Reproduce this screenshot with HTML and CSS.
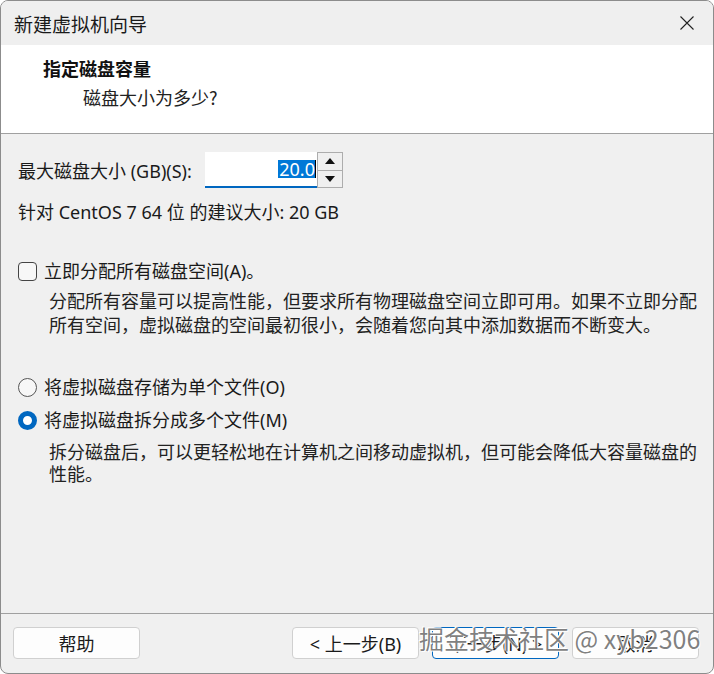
FILE: index.html
```html
<!DOCTYPE html>
<html lang="zh-CN">
<head>
<meta charset="utf-8">
<title>新建虚拟机向导</title>
<link rel="stylesheet" href="styles.css">
</head>
<body>
<div class="window">
  <div class="titlebar">
    <span class="title">新建虚拟机向导</span>
    <span class="close">
      <svg width="16" height="16" viewBox="0 0 16 16"><path d="M1.5 1.5 L14.5 14.5 M14.5 1.5 L1.5 14.5" stroke="#222" stroke-width="1.1" fill="none"/></svg>
    </span>
  </div>
  <div class="header">
    <div class="h-title">指定磁盘容量</div>
    <div class="h-sub">磁盘大小为多少?</div>
  </div>
  <div class="content">
    <div class="size-row">
      <span class="size-label">最大磁盘大小 (GB)(S):</span>
      <div class="spin">
        <div class="spin-input"><span class="sel">20.0</span><span class="caret"></span></div>
        <div class="spin-btns">
          <div class="spin-btn"><svg width="10" height="6" viewBox="0 0 10 6"><path d="M5 0 L10 6 L0 6 Z" fill="#111"/></svg></div>
          <div class="spin-btn"><svg width="10" height="6" viewBox="0 0 10 6"><path d="M0 0 L10 0 L5 6 Z" fill="#111"/></svg></div>
        </div>
      </div>
    </div>
    <div class="recommend">针对 CentOS 7 64 位 的建议大小: 20 GB</div>
    <div class="option check-row">
      <span class="checkbox"></span>
      <span>立即分配所有磁盘空间(A)。</span>
    </div>
    <p class="desc desc-a">分配所有容量可以提高性能，但要求所有物理磁盘空间立即可用。如果不立即分配<br>所有空间，虚拟磁盘的空间最初很小，会随着您向其中添加数据而不断变大。</p>
    <div class="option radio-row first">
      <span class="radio"></span>
      <span>将虚拟磁盘存储为单个文件(O)</span>
    </div>
    <div class="option radio-row">
      <span class="radio on"></span>
      <span>将虚拟磁盘拆分成多个文件(M)</span>
    </div>
    <p class="desc desc-b">拆分磁盘后，可以更轻松地在计算机之间移动虚拟机，但可能会降低大容量磁盘的<br>性能。</p>
  </div>
  <div class="footer">
    <button class="btn">帮助</button>
    <div class="spacer"></div>
    <button class="btn">&lt; 上一步(B)</button>
    <button class="btn default">下一步(N) &gt;</button>
    <button class="btn">取消</button>
  </div>
  <div class="watermark">掘金技术社区 @ xyb2306</div>
</div>
</body>
</html>
```

FILE: styles.css
```css
* { box-sizing: border-box; }

html, body {
  margin: 0;
  padding: 0;
  background: #ffffff;
}

body {
  font-family: "Noto Sans", "Noto Sans CJK SC", sans-serif;
  color: #1a1a1a;
}

.window {
  position: relative;
  width: 714px;
  height: 674px;
  border: 1px solid #8c8c8c;
  border-radius: 8px;
  background: #f0f0f0;
  display: flex;
  flex-direction: column;
  overflow: hidden;
}

.titlebar {
  height: 44px;
  flex: none;
  display: flex;
  align-items: center;
  padding: 0 18px 0 13px;
  background: #efefef;
}

.title {
  font-family: "Noto Sans CJK SC", sans-serif;
  font-size: 19px;
  color: #1a1a1a;
  flex: 1;
}

.close {
  width: 16px;
  height: 16px;
  display: flex;
}

.header {
  height: 89px;
  flex: none;
  background: #ffffff;
  border-bottom: 1px solid #a0a0a0;
  padding: 10px 0 0 42px;
}

.h-title {
  font-family: "Noto Sans CJK SC", sans-serif;
  font-weight: bold;
  font-size: 18px;
  line-height: 26px;
  color: #111;
}

.h-sub {
  font-family: "Noto Sans CJK SC", sans-serif;
  font-size: 18px;
  line-height: 26px;
  margin-top: 3px;
  padding-left: 40px;
  color: #222;
}

.content {
  flex: 1;
  padding: 18px 0 0 17px;
  font-size: 18px;
}

.size-row {
  display: flex;
  align-items: center;
  height: 36px;
}

.size-label {
  width: 187px;
  flex: none;
  white-space: nowrap;
}

.spin {
  display: flex;
  height: 36px;
}

.spin-input {
  width: 112px;
  background: #ffffff;
  border-bottom: 2px solid #0067c0;
  display: flex;
  justify-content: flex-end;
  align-items: center;
  padding-right: 1px;
}

.sel {
  background: #0078d7;
  color: #ffffff;
  font-size: 18px;
  line-height: 18px;
  padding: 0 0 0 1px;
}

.caret {
  width: 1px;
  height: 18px;
  background: #000;
}

.spin-btns {
  width: 26px;
  display: flex;
  flex-direction: column;
  border: 1px solid #adadad;
  background: #f0f0f0;
}

.spin-btn {
  flex: 1;
  display: flex;
  align-items: center;
  justify-content: center;
}

.spin-btn + .spin-btn {
  border-top: 1px solid #adadad;
}

.recommend {
  margin-top: 12px;
  line-height: 24px;
}

.option {
  display: flex;
  align-items: center;
  gap: 7px;
  line-height: 24px;
}

.check-row {
  margin-top: 35px;
}

.checkbox {
  width: 19px;
  height: 19px;
  border: 1px solid #444;
  border-radius: 4px;
  background: #f7f7f7;
  flex: none;
}

.radio {
  width: 19px;
  height: 19px;
  border: 1px solid #555;
  border-radius: 50%;
  background: #f7f7f7;
  flex: none;
}

.radio.on {
  border: 5px solid #0067c0;
  background: #ffffff;
}

.radio-row.first {
  margin-top: 38px;
}

.radio-row + .radio-row {
  margin-top: 9px;
}

.desc {
  margin: 6px 0 0 31px;
  line-height: 24px;
  font-size: 18px;
  color: #222;
  white-space: nowrap;
}

.desc-b {
  margin-top: 9px;
  line-height: 22px;
}

.footer {
  height: 60px;
  flex: none;
  border-top: 1px solid #a0a0a0;
  display: flex;
  align-items: flex-start;
  padding: 13px 14px 0 12px;
  gap: 13px;
}

.spacer {
  flex: 1;
}

.btn {
  width: 127px;
  height: 32px;
  background: #fdfdfd;
  border: 1px solid #d0d0d0;
  border-radius: 4px;
  font-family: "Noto Sans", "Noto Sans CJK SC", sans-serif;
  font-size: 18px;
  color: #1a1a1a;
  padding: 0;
}

.btn.default {
  border-color: #0067c0;
}

.watermark {
  position: absolute;
  left: 418px;
  top: 620px;
  font-family: "Noto Sans CJK SC", sans-serif;
  font-size: 25px;
  line-height: 34px;
  color: rgba(105, 105, 105, 0.85);
  text-shadow: 1px 1px 0 #ffffff, -1px -1px 0 #ffffff, 0 0 2px #ffffff;
  white-space: nowrap;
}
```
